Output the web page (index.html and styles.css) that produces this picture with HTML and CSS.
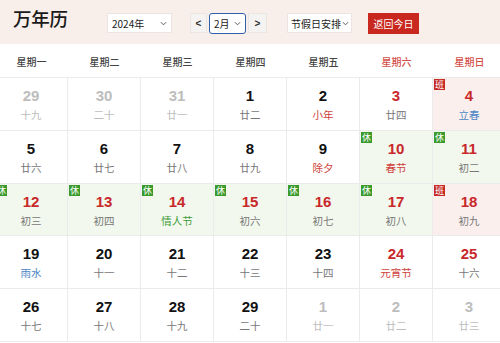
FILE: index.html
```html
<!DOCTYPE html>
<html lang="zh-CN">
<head>
<meta charset="utf-8">
<title>万年历</title>
<link rel="stylesheet" href="styles.css">
</head>
<body>
<header class="top">
  <h1 class="title">万年历</h1>
  <div class="sel year">2024年<svg class="chev" viewBox="0 0 8 5"><path d="M1 1l3 3 3-3"/></svg></div>
  <div class="month-group">
    <span class="nav prev">&lt;</span>
    <div class="sel month">2月<svg class="chev" viewBox="0 0 8 5"><path d="M1 1l3 3 3-3"/></svg></div>
    <span class="nav next">&gt;</span>
  </div>
  <div class="sel holiday">节假日安排<svg class="chev" viewBox="0 0 8 5"><path d="M1 1l3 3 3-3"/></svg></div>
  <button class="today">返回今日</button>
</header>
<div class="weekdays">
  <span>星期一</span><span>星期二</span><span>星期三</span><span>星期四</span><span>星期五</span><span class="wk">星期六</span><span class="wk">星期日</span>
</div>
<div class="grid">
  <div class="cell other"><b>29</b><i>十九</i></div>
  <div class="cell other"><b>30</b><i>二十</i></div>
  <div class="cell other"><b>31</b><i>廿一</i></div>
  <div class="cell"><b>1</b><i>廿二</i></div>
  <div class="cell"><b>2</b><i class="fest">小年</i></div>
  <div class="cell red"><b>3</b><i>廿四</i></div>
  <div class="cell red work"><em class="tag ban">班</em><b>4</b><i class="term">立春</i></div>

  <div class="cell"><b>5</b><i>廿六</i></div>
  <div class="cell"><b>6</b><i>廿七</i></div>
  <div class="cell"><b>7</b><i>廿八</i></div>
  <div class="cell"><b>8</b><i>廿九</i></div>
  <div class="cell"><b>9</b><i class="fest">除夕</i></div>
  <div class="cell red rest"><em class="tag xiu">休</em><b>10</b><i class="fest">春节</i></div>
  <div class="cell red rest"><em class="tag xiu">休</em><b>11</b><i>初二</i></div>

  <div class="cell red rest"><em class="tag xiu">休</em><b>12</b><i>初三</i></div>
  <div class="cell red rest"><em class="tag xiu">休</em><b>13</b><i>初四</i></div>
  <div class="cell red rest"><em class="tag xiu">休</em><b>14</b><i class="green">情人节</i></div>
  <div class="cell red rest"><em class="tag xiu">休</em><b>15</b><i>初六</i></div>
  <div class="cell red rest"><em class="tag xiu">休</em><b>16</b><i>初七</i></div>
  <div class="cell red rest"><em class="tag xiu">休</em><b>17</b><i>初八</i></div>
  <div class="cell red work"><em class="tag ban">班</em><b>18</b><i>初九</i></div>

  <div class="cell"><b>19</b><i class="term">雨水</i></div>
  <div class="cell"><b>20</b><i>十一</i></div>
  <div class="cell"><b>21</b><i>十二</i></div>
  <div class="cell"><b>22</b><i>十三</i></div>
  <div class="cell"><b>23</b><i>十四</i></div>
  <div class="cell red"><b>24</b><i class="fest">元宵节</i></div>
  <div class="cell red"><b>25</b><i>十六</i></div>

  <div class="cell"><b>26</b><i>十七</i></div>
  <div class="cell"><b>27</b><i>十八</i></div>
  <div class="cell"><b>28</b><i>十九</i></div>
  <div class="cell"><b>29</b><i>二十</i></div>
  <div class="cell other"><b>1</b><i>廿一</i></div>
  <div class="cell other"><b>2</b><i>廿二</i></div>
  <div class="cell other"><b>3</b><i>廿三</i></div>
</div>
</body>
</html>
```
FILE: styles.css
```css
* { box-sizing: border-box; }
html, body {
  margin: 0;
  padding: 0;
  width: 500px;
  height: 343px;
  overflow: hidden;
  background: #fff;
  font-family: "Liberation Sans", "Noto Sans CJK SC", sans-serif;
  color: #222;
}
.top {
  height: 44px;
  background: #f8eeea;
  display: flex;
  align-items: center;
  padding-left: 13px;
  white-space: nowrap;
}
.top > * { flex-shrink: 0; }
.title {
  margin: 0 39px 0 0;
  font-family: "Noto Sans CJK SC", sans-serif;
  font-size: 18.5px;
  font-weight: 500;
  line-height: 20px;
  width: 55px;
  letter-spacing: -0.3px;
  white-space: nowrap;
  position: relative;
  top: -4px;
  color: #1a1a1a;
}
.sel {
  height: 20px;
  background: #fff;
  border: 1px solid #ece4e0;
  display: flex;
  align-items: center;
  font-family: "Noto Sans CJK SC", sans-serif;
  font-size: 10px;
  color: #222;
  padding-left: 4px;
  position: relative;
  top: 1px;
  white-space: nowrap;
}
.chev {
  width: 7px;
  height: 5px;
  fill: none;
  stroke: #555;
  stroke-width: 1.1;
  margin-left: auto;
  margin-right: 4px;
  flex-shrink: 0;
}
.year { width: 65px; margin-right: 18px; }
.month-group {
  display: flex;
  align-items: center;
  margin-right: 20px;
  position: relative;
  top: 1px;
}
.nav {
  height: 20px;
  width: 17px;
  background: #f5f3f2;
  border: 1px solid #ece6e3;
  font-size: 10px;
  font-weight: bold;
  display: flex;
  align-items: center;
  justify-content: center;
  color: #333;
}
.month {
  width: 37px;
  height: 21px;
  border: 1.5px solid #2f5fa8;
  border-radius: 3px;
  margin: 0 2px 0 2px;
  top: 0;
}
.next { width: 19px; }
.holiday { width: 65px; margin-right: 16px; padding-left: 3px; }
.holiday .chev { margin-left: 1px; margin-right: 2px; }
.today {
  height: 21px;
  width: 51px;
  border: 0;
  padding: 0;
  background: #c9281f;
  color: #fff;
  font-family: "Noto Sans CJK SC", sans-serif;
  font-size: 10px;
  position: relative;
  top: 1px;
  white-space: nowrap;
}
.weekdays {
  display: grid;
  grid-template-columns: repeat(7, 73px);
  margin-left: -5px;
  height: 34px;
  align-items: center;
  border-bottom: 1px solid #ebebeb;
}
.weekdays span {
  text-align: center;
  font-family: "Noto Sans CJK SC", sans-serif;
  font-size: 10px;
  font-weight: 500;
  color: #444;
  padding-top: 1px;
}
.weekdays .wk { color: #d4504a; }
.grid {
  display: grid;
  grid-template-columns: repeat(7, 73px);
  grid-auto-rows: 52.8px;
  margin-left: -5px;
}
.cell {
  position: relative;
  border-right: 1px solid #ebebeb;
  border-bottom: 1px solid #ebebeb;
  display: flex;
  flex-direction: column;
  align-items: center;
  padding-top: 9px;
}
.cell b {
  font-size: 15px;
  line-height: 18px;
  font-weight: bold;
  color: #111;
}
.cell i {
  font-style: normal;
  font-family: "Noto Sans CJK SC", sans-serif;
  font-size: 10.5px;
  line-height: 14px;
  margin-top: 3px;
  color: #777;
  white-space: nowrap;
}
.cell.red b { color: #c9282a; }
.cell.other b { color: #bdbdbd; }
.cell.other i { color: #bdbdbd; }
.cell i.fest { color: #cf3f3a; }
.cell i.term { color: #4a86c4; }
.cell i.green { color: #3f9a3a; }
.cell.rest { background: #f2f8ed; }
.cell.work { background: #fbefee; }
.tag {
  position: absolute;
  left: 1px;
  top: 1px;
  width: 11px;
  height: 11px;
  font-style: normal;
  font-family: "Noto Sans CJK SC", sans-serif;
  font-size: 9px;
  line-height: 11px;
  color: #fff;
  text-align: center;
}
.xiu { background: #3b9a2c; }
.ban { background: #c62a25; }
```
